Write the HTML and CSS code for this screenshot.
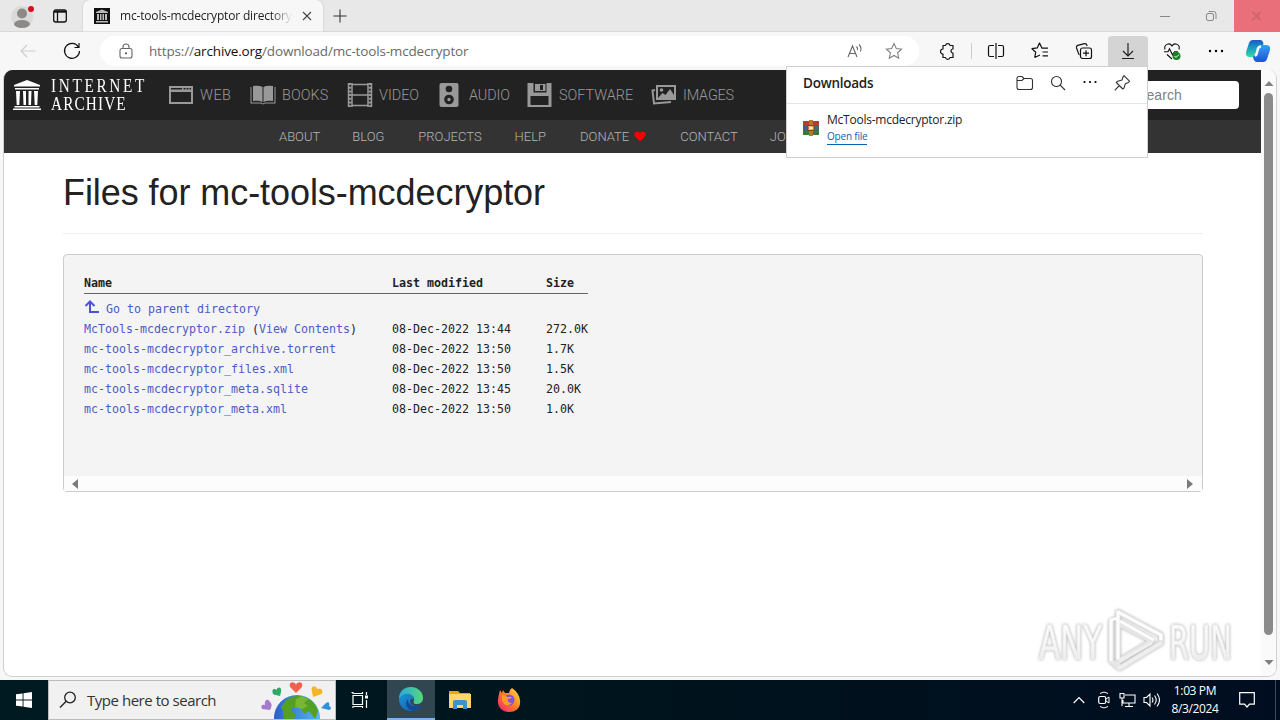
FILE: index.html
```html
<!DOCTYPE html>
<html lang="en">
<head>
<meta charset="utf-8">
<title>mc-tools-mcdecryptor directory listing</title>
<link rel="stylesheet" href="styles.css">
</head>
<body>
<div class="screen">
  <div class="tabbar">
    <svg class="profile" width="28" height="30" viewBox="0 0 28 30"><circle cx="12" cy="16" r="11" fill="#dcdad8"/><circle cx="12" cy="12.500" r="5" fill="#8d8987"/><ellipse cx="12" cy="23" rx="8" ry="4" fill="#8d8987"/><circle cx="21" cy="8" r="3" fill="#d90d20"/></svg>
    <svg class="workspaces" width="16" height="16" viewBox="0 0 16 16"><rect x="1.700" y="2" width="12.600" height="12" rx="2" fill="none" stroke="#111" stroke-width="1.300"/><path d="M2 3.700h12" stroke="#111" stroke-width="2"/><path d="M5.500 4v10" stroke="#111" stroke-width="1.300"/></svg>
    <div class="tab">
      <svg width="16" height="16" viewBox="0 0 16 16"><path fill="#111" d="M0 0h16v16H0z"/><path d="M2 4l6-2.500L14 4v1H2zM3 6h2v6H3zM6 6h1.500v6H6zM8.500 6H10v6H8.500zM11 6h2v6h-2zM2 13h12v1.500H2z" fill="#bbb"/></svg>
      <span class="tab-title">mc-tools-mcdecryptor directory</span>
      <svg class="tab-close" width="10" height="10" viewBox="0 0 10 10"><path d="M1 1l8 8M9 1L1 9" stroke="#444" stroke-width="1.100"/></svg>
    </div>
    <svg class="newtab" width="16" height="16" viewBox="0 0 16 16"><path d="M8 1.500v13M1.500 8h13" stroke="#333" stroke-width="1.100"/></svg>
    <div class="winctl">
      <svg width="46" height="32" viewBox="0 0 46 32"><path d="M18 16.500h10" stroke="#888"/></svg>
      <svg width="46" height="32" viewBox="0 0 46 32"><rect x="18.500" y="13.500" width="7" height="7" rx="1.500" fill="none" stroke="#888"/><path d="M20.500 11.500h5q2.500 0 2.500 2.500v5" fill="none" stroke="#888"/></svg>
      <svg class="closewin" width="46" height="32" viewBox="0 0 46 32"><path d="M18.500 12l8 8M26.500 12l-8 8" stroke="#c5656f" stroke-width="1.500"/></svg>
    </div>
  </div>

  <div class="toolbar">
    <svg class="back" width="16" height="14" viewBox="0 0 16 14"><path d="M15.500 7H1M7 1L1 7l6 6" fill="none" stroke="#cdcdcd" stroke-width="1.200"/></svg>
    <svg class="reload" width="18" height="18" viewBox="0 0 18 18"><path d="M15.300 4.800A7.500 7.500 0 1 0 16.500 9M16 1v4.500h-4.500" fill="none" stroke="#111" stroke-width="1.200"/></svg>
    <div class="address">
      <svg class="lock" width="14" height="16" viewBox="0 0 14 16"><rect x="1" y="5.500" width="12" height="9.500" rx="2" fill="none" stroke="#666" stroke-width="1.100"/><path d="M4 5.500V4a3 3 0 0 1 6 0v1.500" fill="none" stroke="#666" stroke-width="1.100"/><circle cx="7" cy="10.300" r="1.100" fill="#555"/></svg>
      <span class="url">https://<b>archive.org</b>/download/mc-tools-mcdecryptor</span>
      <svg class="read" width="16" height="16" viewBox="0 0 16 16"><path d="M1 14L5.500 3 10 14M2.500 10.500h6" fill="none" stroke="#666" stroke-width="1.100"/><path d="M9.500 3.500q1.500 1.500 1 3.500M12 1.500q3 3 1.500 7" fill="none" stroke="#666" stroke-width="1.100"/></svg>
      <svg class="star" width="18" height="18" viewBox="0 0 18 18"><path d="M9 1.500l2.300 5 5.300.6-4 3.700 1.100 5.400L9 13.500l-4.700 2.700 1.100-5.400-4-3.700 5.300-.6z" fill="none" stroke="#808080" stroke-width="1.100"/></svg>
    </div>
    <div class="tools">
      <svg class="ext" width="40" height="30" viewBox="-20 -15 40 30"><path d="M-4-5.500H-1.500a2.300 2.300 0 0 1 4.500 0H6V-2a2 2 0 0 0 0 4V6.500H3a2.300 2.300 0 0 1-4.500 0H-4V3a2.500 2.500 0 0 1 0-5z" fill="none" stroke="#111" stroke-width="1.200" stroke-linejoin="round"/></svg>
      <i class="sep"></i>
      <svg width="44" height="30" viewBox="-22 -15 44 30"><path d="M-2-5.500h-4q-1.500 0-1.500 1.500v8q0 1.500 1.500 1.500H-2M2-5.500h4q1.500 0 1.500 1.500v8q0 1.500-1.500 1.500H2M0-8V8" fill="none" stroke="#111" stroke-width="1.200"/></svg>
      <svg width="44" height="30" viewBox="-22 -15 44 30"><path d="M-5.300 6.500l1-5.200-3.700-3.600 5.200-.8L-.5-8 2-2.800H8M2.500 1h5.500M2.500 4.800h5.500M-5.300 6.500L0 4" fill="none" stroke="#111" stroke-width="1.200" stroke-linejoin="round"/></svg>
      <svg width="44" height="30" viewBox="-22 -15 44 30"><rect x="-3.500" y="-3" width="11" height="10.500" rx="2" fill="none" stroke="#111" stroke-width="1.200"/><path d="M2-.8v6M-1 2.200h6M-4.500 4C-6 3-6 0-7.500-3q-.5-2 1.200-2.600L.5-7.300q2-.5 2.600 2.300" fill="none" stroke="#111" stroke-width="1.200"/></svg>
      <svg class="active" width="40" height="30" viewBox="-20 -15 40 30"><path d="M0-8V5M-5 0l5 5 5-5M-6 7.500H6" fill="none" stroke="#222" stroke-width="1.200"/></svg>
      <svg width="44" height="30" viewBox="-22 -15 44 30"><path d="M-7-1.500c-1.500-5 4.500-7.500 7-3.500 2.500-4 8.500-1.500 7 3.500M-8 .8h4l1.500-3 3 6 2-3H6M-5 3.500L0 8" fill="none" stroke="#111" stroke-width="1.100"/><circle cx="4.500" cy="5" r="4" fill="#168221"/><path d="M2.500 5l1.500 1.500 3-3" fill="none" stroke="#fff"/></svg>
      <svg width="44" height="30" viewBox="-22 -15 44 30"><circle cx="-6" r="1.200"/><circle r="1.200"/><circle cx="6" r="1.200"/></svg>
      <svg class="copilot" width="26" height="26" viewBox="0 0 26 26"><defs><linearGradient id="cp1" x1="0" y1="0" x2="0" y2="1"><stop stop-color="#1d58c9"/><stop offset=".5" stop-color="#16a3bd"/><stop offset="1" stop-color="#3bd8a5"/></linearGradient><linearGradient id="cp2" x1="0" y1="0" x2="0" y2="1"><stop stop-color="#35a4ee"/><stop offset="1" stop-color="#1c50d8"/></linearGradient></defs><path d="M8 2h7q3 0 3.500 4L14 13q-2 6-5 6H5q-5 0-4-5L4 5q1-3 4-3z" fill="url(#cp1)"/><path d="M18 7h3q5 0 4 5l-3 9q-1 3-4 3h-6q-3 0-4-5l5-7q1-5 5-5z" fill="url(#cp2)"/><path d="M16 8.500q-3 0-3.500 4T10 18" fill="none" stroke="#f5fbff" stroke-width="2.500"/></svg>
    </div>
  </div>

  <div class="page">
    <div class="content">
      <div class="topnav">
        <svg class="logo" width="28" height="32" viewBox="0 0 28 32"><path d="M1 6L14 1l13 5v1.500H1zM2 9h24v1.500H2zM3 12h4l-.7 14H3.700zM10 12h3v14h-2.500zM15.500 12h3L18 26h-2.500zM21 12h4l-.7 14h-2.600zM1.500 27h25v1.500h-25zM0 29.500h28V31H0z" fill="#fff"/></svg>
        <div class="logotext"><span class="l1">INTERNET</span><span class="l2">ARCHIVE</span></div>
        <ul class="media">
          <li class="web"><svg width="26" height="26" viewBox="0 0 26 26"><path d="M1 4h24v18H1zM3 10v10h20V10zM3 6v1.500h11V6zM15.500 6v1.500h2V6zM18.500 6v1.500h2V6zM21.500 6v1.500H23V6z" fill="#999" fill-rule="evenodd"/></svg><span>WEB</span></li>
          <li class="books"><svg width="26" height="26" viewBox="0 0 26 26"><path d="M3 4q6-1 9.500 1v15q-4-2-9.500-1zM23 4q-6-1-9.500 1v15q4-2 9.500-1zM.5 5h1v15.500H11l2 1 2-1h9.500V5h1v16.500H15l-2 1-2-1H.5z" fill="#999"/></svg><span>BOOKS</span></li>
          <li class="video"><svg width="26" height="26" viewBox="0 0 26 26"><path d="M3 1v24M23 1v24" stroke="#999" stroke-width="3" stroke-dasharray="2 1.700"/><path d="M5 1v24M21 1v24M5 2.500h16M5 13h16M5 23.500h16M1.500 1v24M24.500 1v24" stroke="#999" stroke-width="1.500"/></svg><span>VIDEO</span></li>
          <li class="audio"><svg width="26" height="26" viewBox="0 0 26 26"><rect x="2.500" y="1" width="19" height="24" rx="2" fill="#999"/><circle cx="12" cy="7" r="3.300" fill="#222"/><circle cx="12" cy="17.500" r="4.800" fill="#222"/><circle cx="12" cy="17.500" r="1.700" fill="#999"/></svg><span>AUDIO</span></li>
          <li class="software"><svg width="26" height="26" viewBox="0 0 26 26"><path d="M.5 1h24v24H.5zM6.500 1v9.500h13V1zM3.500 14v9h18v-9z" fill="#999" fill-rule="evenodd"/><path d="M8 2h10.500v7H8z" fill="#999"/><path d="M13 3h3v5h-3z" fill="#222"/></svg><span>SOFTWARE</span></li>
          <li class="images"><svg width="26" height="26" viewBox="0 0 26 26"><path d="M4 8L1.500 8.500l1.500 13 17-1.500" fill="none" stroke="#999" stroke-width="2"/><path d="M5 3h20v15H5zM7 5v11h16V5z" fill="#999" fill-rule="evenodd"/><circle cx="10.500" cy="8" r="1.800" fill="#999"/><path d="M7 16l4.500-5 3 2L19 7l4 6v3z" fill="#999"/></svg><span>IMAGES</span></li>
        </ul>
        <div class="search">Search</div>
      </div>
      <div class="subnav"><span>ABOUT</span><span class="blog">BLOG</span><span class="projects">PROJECTS</span><span>HELP</span><span class="donate">DONATE <svg width="12" height="11" viewBox="0 0 12 11"><path d="M6 10.500L1 5.500C-1.500 2 3-1.500 6 2c3-3.500 7.500 0 5 3.500z" fill="#f80000"/></svg></span><span class="contact">CONTACT</span><span>JOBS</span></div>
      <div class="main">
        <h1>Files for mc-tools-mcdecryptor</h1>
        <div class="box">
          <table>
            <thead><tr><th class="c1">Name</th><th class="c2">Last modified</th><th>Size</th></tr></thead>
            <tbody>
              <tr><td><svg class="up" width="15" height="14" viewBox="0 0 15 14"><path d="M6 2.500V12H15M1.500 6L6 1.500 10.500 6" fill="none" stroke="#4b50dd" stroke-width="2"/></svg><a>Go to parent directory</a></td><td></td><td></td></tr>
              <tr><td><a>McTools-mcdecryptor.zip</a> (<a>View Contents</a>)</td><td>08-Dec-2022 13:44</td><td>272.0K</td></tr>
              <tr><td><a>mc-tools-mcdecryptor_archive.torrent</a></td><td>08-Dec-2022 13:50</td><td>1.7K</td></tr>
              <tr><td><a>mc-tools-mcdecryptor_files.xml</a></td><td>08-Dec-2022 13:50</td><td>1.5K</td></tr>
              <tr><td><a>mc-tools-mcdecryptor_meta.sqlite</a></td><td>08-Dec-2022 13:45</td><td>20.0K</td></tr>
              <tr><td><a>mc-tools-mcdecryptor_meta.xml</a></td><td>08-Dec-2022 13:50</td><td>1.0K</td></tr>
            </tbody>
          </table>
          <div class="hscroll"><svg width="6" height="10" viewBox="0 0 6 10"><path d="M6 0v10L0 5z" fill="#7b7b7b"/></svg><svg width="6" height="10" viewBox="0 0 6 10"><path d="M0 0v10l6-5z" fill="#7b7b7b"/></svg></div>
        </div>
      </div>
    </div>
    <div class="vscroll"><svg width="10" height="6" viewBox="0 0 10 6"><path d="M.5 6h9L5 1z" fill="#808080"/></svg><div class="thumb"></div><svg width="10" height="6" viewBox="0 0 10 6"><path d="M.5 0h9L5 5z" fill="#808080"/></svg></div>
  </div>

  <div class="taskbar">
    <div class="start"><svg width="16" height="16" viewBox="0 0 16 16"><path d="M0 2.300L6.600 1.400v6.100H0zM7.500 1.300L16 0v7.500H7.500zM0 8.400h6.600v6.200L0 13.700zM7.500 8.400H16V16l-8.500-1.300z" fill="#fff"/></svg></div>
    <div class="tsearch">
      <svg width="18" height="18" viewBox="0 0 18 18"><circle cx="11" cy="6.500" r="5.300" fill="none" stroke="#222" stroke-width="1.300"/><path d="M7.200 10.300L1 16.500" stroke="#222" stroke-width="1.400"/></svg>
      <span>Type here to search</span>
      <svg class="globe" width="72" height="38" viewBox="261 682 72 38"><defs><linearGradient id="gl"><stop stop-color="#2b5fcc"/><stop offset="1" stop-color="#55b8f2"/></linearGradient><clipPath id="gc"><circle cx="297" cy="719" r="23"/></clipPath></defs><circle cx="297" cy="719" r="23" fill="url(#gl)"/><g clip-path="url(#gc)" fill="#549f24"><path d="M281 708q8-13 20-11 14 3 17 15l-3 8-6-8-5 3-4-8-8 2-1 6-7-1zM283 712l6-1 7 4-4 8h-8z"/><path d="M296 700l6-3 6 3-4 4 4 3-6 3-7-2z" fill="#78b733"/></g><path d="M296 694l-5.500-5.500c-3-5 3-7 5.500-3 2.500-4 8.500-2 5.500 3z" fill="#f1614d"/><path d="M280 697l-6.500-1.500c-3-5 1-7 3-4.500 1-4 6-3 4.500 2z" fill="#2fa866"/><path d="M313 698l-1.500-8c1-4 5-3 5.500 0 4-2 7 2 4.500 5z" fill="#f5b529"/><path d="M270 711l-8-1c-2-4 1-5 3-4-1-5 3-7 5-3 3 2 1 6 0 8z" fill="#a57ace"/><path d="M321 709l5-5c3-2 4 1 3 3 3 1 2 4 0 4z" fill="#2e91da"/></svg>
    </div>
    <div class="app"><svg width="20" height="18" viewBox="0 0 20 18"><path d="M3 4.500h9.500v9H3zM3 1v2M12.500 1v2M1.500 1.500H3M3 15v2M12.500 15v2M16.500 1v3M16.500 9v8" fill="none" stroke="#fff" stroke-width="1.200"/><path d="M15 4.500h3v3h-3z" fill="#fff"/><path d="M3.500 2.500h9M3.500 15.500h9" stroke="#fff"/></svg></div>
    <div class="app edge"><svg width="26" height="26" viewBox="0 0 26 26"><defs><linearGradient id="eg1"><stop stop-color="#2aa9dc"/><stop offset="1" stop-color="#55d879"/></linearGradient><linearGradient id="eg2" x1="0" y1="0" x2="1" y2="1"><stop stop-color="#1b96d5"/><stop offset="1" stop-color="#1456aa"/></linearGradient></defs><path d="M1 13C1 5 6 1 13 1c8 0 12 6 12 11 0 4-3 6-6 6-5 0-3-2-3-5 0-5-10-7-15 0z" fill="url(#eg1)"/><path d="M1 13C4 6 15 6 16 13c-5-1-6 5 2 7 2 .5 4 0 5-1-2 4-6 6-10 6C6 25 1 20 1 13z" fill="url(#eg2)"/><path d="M10 13c-4 4-1 11 5 12 4-1 7-3 8-6-7 3-14 0-13-6z" fill="#124b94"/></svg></div>
    <div class="app"><svg width="24" height="22" viewBox="0 0 24 22"><path d="M1 2h9l2 2h10v4H1z" fill="#e8a317"/><path d="M1 5h22v14H1z" fill="#ffd768"/><path d="M5 20v-7q0-2 2-2h10q2 0 2 2v7h-4v-4H9v4z" fill="#3d91cf"/></svg></div>
    <div class="app"><svg width="26" height="26" viewBox="0 0 26 26"><defs><linearGradient id="ff" x1="1" y1="0" x2="0" y2="1"><stop stop-color="#ffe443"/><stop offset=".5" stop-color="#ff7b25"/><stop offset="1" stop-color="#f41b78"/></linearGradient></defs><path d="M3 7l1-4 2 3 1-3 2 3 4 0q0-3 3-5 7 5 8 12c1 8-4 12-11 12S1 20 2 12z" fill="url(#ff)"/><circle cx="13" cy="13" r="5.500" fill="#8450df"/><path d="M6 8q4 0 5 2h5q-1 2-4 2-1 4 4 4-7 6-10-3z" fill="#ff9b28"/></svg></div>
    <div class="tray">
      <svg class="chev" width="12" height="8" viewBox="0 0 12 8"><path d="M.7 7L6 1.500 11.300 7" fill="none" stroke="#fff" stroke-width="1.200"/></svg>
      <svg class="meet" width="12" height="18" viewBox="0 0 12 18"><rect x=".7" y="5.500" width="7" height="7" rx="1.500" fill="none" stroke="#fff" stroke-width="1.200"/><path d="M8 8l3-2v6L8 10M2 2.500q4-3 8 0M2 15.500q4 3 8 0" fill="none" stroke="#fff"/></svg>
      <svg class="net" width="17" height="16" viewBox="0 0 17 16"><path d="M6 3h10v8H4V8M6 14.500h8M10 11v3M1 1.500h4V6H1zM3 6v8" fill="none" stroke="#fff" stroke-width="1.100"/></svg>
      <svg class="vol" width="17" height="16" viewBox="0 0 17 16"><path d="M1 5.500h2.500L7 2v12l-3.500-3.500H1zM9 5.500q2 2.500 0 5M11.500 3.500q3.500 4.500 0 9M14 1.500q5 6.500 0 13" fill="none" stroke="#fff" stroke-width="1.100"/></svg>
      <div class="clock"><span>1:03 PM</span><span class="date">8/3/2024</span></div>
      <svg class="note" width="16" height="16" viewBox="0 0 16 16"><path d="M.7.700h14.600v11.500H10.500L8 15l-2.500-2.800H.7z" fill="none" stroke="#fff" stroke-width="1.200"/></svg>
    </div>
  </div>

  <div class="popup">
    <div class="pophead"><strong>Downloads</strong>
      <svg width="18" height="16" viewBox="0 0 18 16"><path d="M1 3.500q0-2 2-2h3l2 2h6.500q2 0 2 2v7q0 2-2 2H3q-2 0-2-2zM1 5.500h5l2-2" fill="none" stroke="#333" stroke-width="1.100"/></svg>
      <svg width="16" height="16" viewBox="0 0 16 16"><circle cx="6.500" cy="6.500" r="5" fill="none" stroke="#333" stroke-width="1.100"/><path d="M10.200 10.200L15 15" stroke="#333" stroke-width="1.200"/></svg>
      <svg width="16" height="16" viewBox="0 0 16 16"><circle cx="2.500" cy="7" r="1.100"/><circle cx="8" cy="7" r="1.100"/><circle cx="13.500" cy="7" r="1.100"/></svg>
      <svg width="16" height="16" viewBox="0 0 16 16"><path d="M10 .7l5.500 5.500-1 1.300-3.200 1.300-1.200 4-1.300 1.200-6.500-6.500 1.400-1.300L8 5l1-3zM5.500 10.500L.7 15.300" fill="none" stroke="#333" stroke-width="1.100" stroke-linejoin="round"/></svg>
    </div>
    <div class="popitem">
      <svg width="16" height="16" viewBox="0 0 16 16"><path d="M0 1h16v5H0z" fill="#b53b33"/><path d="M0 6h16v4H0z" fill="#3f6c74"/><path d="M0 6h8v4H0z" fill="#46589c"/><path d="M0 10h16v5H0z" fill="#377a39"/><path d="M6 0h4v16H6z" fill="#b9752a"/><path d="M4.500 5h7v6h-7z" fill="#8b421e"/><path d="M5.500 6h5v4h-5z" fill="#e8bd68"/><path d="M6.500 7h3v2h-3z" fill="#fff3dc"/></svg>
      <div class="popfile"><span class="fname">McTools-mcdecryptor.zip</span><a>Open file</a></div>
    </div>
  </div>

  <svg class="watermark" width="210" height="70" viewBox="0 0 210 70"><defs><linearGradient id="wm" x1="0" y1="0" x2="0" y2="1"><stop stop-color="#fdfdfd"/><stop offset=".55" stop-color="#f6f6f6"/><stop offset="1" stop-color="#e2e2e2"/></linearGradient></defs><g fill="url(#wm)"><text x="4" y="52" textLength="63" lengthAdjust="spacingAndGlyphs">ANY</text><text x="134" y="52" textLength="63" lengthAdjust="spacingAndGlyphs">RUN</text></g><g class="play" fill="none" stroke-linejoin="round"><path d="M76 13v41l7 6V5l43 23v8L83 62M84 17l33 17-33 20" stroke="#e6e6e6" stroke-width="5"/><path d="M76 54V13l7-2V5l43 23v5M83 12v40M85 14l34 19" stroke="#fdfdfd" stroke-width="3"/><path d="M126 36L83 62M117 36L84 54" stroke="#efefef" stroke-width="3"/></g></svg>
</div>
</body>
</html>
```
FILE: styles.css
```css
* { box-sizing: border-box; }
body { margin: 0; font-family: "Open Sans", "Noto Sans", sans-serif; }
svg { display: block; flex: none; }
.screen { position: relative; width: 1280px; height: 720px; overflow: hidden; display: flex; flex-direction: column; background: #f7f7f7; white-space: nowrap; }

.tabbar { height: 32px; background: #e8e8e8; display: flex; align-items: center; border-bottom: 1px solid #d8d8d8; flex: none; }
.profile { margin-left: 10px; }
.workspaces { margin-left: 14px; }
.tab { margin-left: 15px; width: 240px; height: 32px; background: #f7f7f7; border-radius: 7px 7px 0 0; box-shadow: 0 0 2px #bbb; clip-path: inset(0 -3px 0 -3px); display: flex; align-items: center; padding-left: 11px; }
.tab-title { margin-left: 10px; width: 172px; overflow: hidden; font-size: 12px; letter-spacing: -0.17px; color: #222; -webkit-mask-image: linear-gradient(90deg, #000 88%, transparent); mask-image: linear-gradient(90deg, #000 88%, transparent); }
.tab-close { margin-left: 10px; }
.newtab { margin-left: 9px; }
.winctl { margin-left: auto; display: flex; }
.closewin { background: #e9707b; }

.toolbar { height: 38px; display: flex; align-items: center; flex: none; }
.back { margin-left: 20px; }
.reload { margin-left: 27px; }
.address { margin-left: 19px; width: 819px; height: 30px; border-radius: 15px; background: #fff; display: flex; align-items: center; }
.lock { margin-left: 19px; }
.url { margin-left: 16px; font-size: 13.5px; color: #6a6a6a; width: 698px; letter-spacing: -0.16px; }
.url b { font-weight: 400; color: #111; }
.star { margin-left: 22px; }
.tools { display: flex; align-items: center; margin-left: 8px; }
.sep { width: 1px; height: 16px; background: #ccc; margin: 0 2px 0 4px; }
.active { background: #d4d4d4; border-radius: 4px 4px 0 0; margin: 0 2px; }
.copilot { margin-left: 7px; }

.page { margin-left: 3px; width: 1274px; height: 607px; border: 1px solid #d0d0d0; border-top: 0; border-radius: 9px; background: #fff; overflow: hidden; display: flex; flex: none; }
.content { width: 1257px; }
.topnav { height: 50px; background: #222; display: flex; align-items: center; font-family: Roboto, "Liberation Sans", sans-serif; }
.logo { margin-left: 9px; }
.logotext { margin-left: 10px; width: 108px; display: flex; flex-direction: column; align-items: flex-start; font: 18px/18px "Liberation Serif", serif; color: #fff; }
.logotext span { transform: scaleX(0.85); transform-origin: left; }
.l1 { letter-spacing: 3.1px; }
.l2 { letter-spacing: 1.3px; }
.media { list-style: none; margin: 0 0 0 9px; padding: 0; display: flex; color: #999; font-size: 14.4px; font-weight: 300; }
.media li { display: flex; align-items: center; gap: 6px; }
.web { width: 82px; letter-spacing: 0.5px; }
.books { width: 97px; letter-spacing: 0.1px; }
.video { width: 90px; }
.audio { width: 90px; letter-spacing: -0.1px; }
.software { width: 124px; }
.images { letter-spacing: -0.15px; }
.search { margin-left: auto; margin-right: 22px; width: 120px; height: 28px; background: #fff; border-radius: 4px; color: #808080; font: 14px/28px "Liberation Sans", sans-serif; letter-spacing: 0.1px; padding-left: 18px; }
.subnav { height: 33px; background: #333; color: #b5b5b5; display: flex; align-items: center; gap: 33px; padding-left: 275px; font: 300 13px Roboto, "Liberation Sans", sans-serif; }
.blog { margin: 0 1px 0 -1px; }
.donate { display: flex; align-items: center; gap: 5px; margin: 0 1px 0 1px; }
.contact { margin-right: -1px; }
.main { padding: 18px 58px 0 59px; }
h1 { margin: 0; height: 63px; border-bottom: 1px solid #eee; font: 36px/43px "Liberation Sans", Arial, sans-serif; letter-spacing: -0.07px; color: #222; }
.box { margin-top: 20px; height: 238px; border: 1px solid #ccc; border-radius: 4px; background: #f4f4f4; padding: 18px 0 0 20px; display: flex; flex-direction: column; }
table { border-collapse: collapse; width: 504px; table-layout: fixed; font: 11.63px/20px "DejaVu Sans Mono", monospace; color: #222; }
th { text-align: left; padding: 0; height: 20px; border-bottom: 1px solid #666; }
tbody tr:first-child td { padding-top: 5px; }
td { padding: 0; height: 20px; }
.c1 { width: 308px; }
.c2 { width: 154px; }
a { color: #4b5cc8; }
.up { display: inline-block; margin-right: 7px; vertical-align: -1px; }
.hscroll { margin: auto 0 0 -20px; height: 15px; background: #fcfcfc; display: flex; justify-content: space-between; align-items: center; padding: 0 9px 0 8px; }
.vscroll { width: 15px; background: #fafafa; display: flex; flex-direction: column; align-items: center; padding-top: 10px; }
.thumb { width: 9px; height: 542px; border-radius: 5px; background: #8b8b8b; margin: 7px 0 25px; }

.taskbar { margin-top: 3px; height: 40px; background: linear-gradient(90deg, #001a22, #00141d 50%, #000d20); display: flex; flex: none; color: #fff; }
.start { width: 48px; display: flex; align-items: center; justify-content: center; }
.tsearch { width: 288px; background: #f1f1f1; border: 1px solid #bbb; display: flex; align-items: center; padding-left: 10px; color: #333; font-size: 15px; letter-spacing: -0.47px; }
.tsearch span { margin-left: 10px; width: 174px; }
.app { width: 48px; display: flex; align-items: center; justify-content: center; margin-right: 1px; }
.app.edge { background: #314650; border-bottom: 2px solid #76b5ee; margin-left: 2px; }
.tray { margin-left: auto; display: flex; align-items: center; padding-right: 20px; border-right: 1px solid #3c4a59; margin-right: 4px; }
.meet { margin-left: 13px; }
.net { margin-left: 9px; }
.vol { margin-left: 7px; }
.clock { width: 70px; display: flex; flex-direction: column; align-items: center; font-size: 12px; line-height: 18px; letter-spacing: -0.37px; }
.note { margin-left: 9px; }

.popup { position: absolute; left: 786px; top: 66px; width: 362px; height: 92px; background: #fff; border: 1px solid #cfcfcf; }
.pophead { height: 37px; border-bottom: 1px solid #e4e4e4; display: flex; align-items: center; padding: 0 17px 4px 16px; gap: 16px; }
.pophead strong { font-size: 13.5px; font-weight: 600; letter-spacing: -0.25px; color: #222; margin-right: auto; }
.popitem { display: flex; align-items: center; padding: 7px 0 0 16px; gap: 8px; }
.popfile { display: flex; flex-direction: column; align-items: flex-start; }
.fname { font-size: 12px; line-height: 18px; letter-spacing: -0.24px; color: #222; }
.popfile a { font-size: 10px; line-height: 15px; letter-spacing: -0.2px; color: #0e62b5; border-bottom: 1px solid #0e62b5; }
.watermark { position: absolute; left: 1035px; top: 607px; font: 46px "DejaVu Sans Condensed", "DejaVu Sans", sans-serif; stroke: #f0f0f0; stroke-width: 1px; filter: drop-shadow(0 0 1.500px #aaa); }
```
